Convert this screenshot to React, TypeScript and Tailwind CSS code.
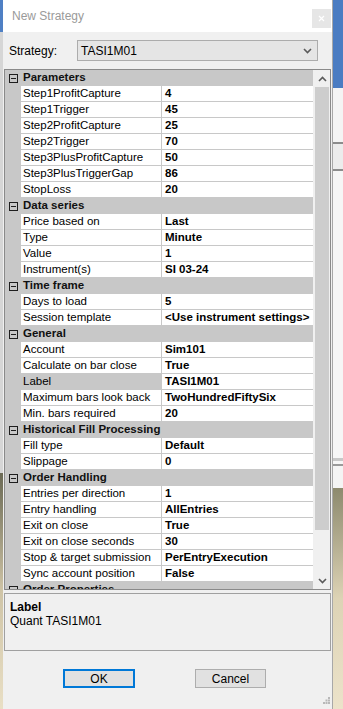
import React from "react";

type Row = { name: string; value: string; selected?: boolean };
type Cat = { title: string; rows: Row[] };

const cats: Cat[] = [
  {
    title: "Parameters",
    rows: [
      { name: "Step1ProfitCapture", value: "4" },
      { name: "Step1Trigger", value: "45" },
      { name: "Step2ProfitCapture", value: "25" },
      { name: "Step2Trigger", value: "70" },
      { name: "Step3PlusProfitCapture", value: "50" },
      { name: "Step3PlusTriggerGap", value: "86" },
      { name: "StopLoss", value: "20" },
    ],
  },
  {
    title: "Data series",
    rows: [
      { name: "Price based on", value: "Last" },
      { name: "Type", value: "Minute" },
      { name: "Value", value: "1" },
      { name: "Instrument(s)", value: "SI 03-24" },
    ],
  },
  {
    title: "Time frame",
    rows: [
      { name: "Days to load", value: "5" },
      { name: "Session template", value: "<Use instrument settings>" },
    ],
  },
  {
    title: "General",
    rows: [
      { name: "Account", value: "Sim101" },
      { name: "Calculate on bar close", value: "True" },
      { name: "Label", value: "TASI1M01", selected: true },
      { name: "Maximum bars look back", value: "TwoHundredFiftySix" },
      { name: "Min. bars required", value: "20" },
    ],
  },
  {
    title: "Historical Fill Processing",
    rows: [
      { name: "Fill type", value: "Default" },
      { name: "Slippage", value: "0" },
    ],
  },
  {
    title: "Order Handling",
    rows: [
      { name: "Entries per direction", value: "1" },
      { name: "Entry handling", value: "AllEntries" },
      { name: "Exit on close", value: "True" },
      { name: "Exit on close seconds", value: "30" },
      { name: "Stop & target submission", value: "PerEntryExecution" },
      { name: "Sync account position", value: "False" },
    ],
  },
  { title: "Order Properties", rows: [] },
];

function MinusBox() {
  return (
    <div className="w-[9px] h-[9px] border border-[#1e1e1e] flex items-center justify-center bg-[#c8c8c8]">
      <div className="w-[5px] h-[1px] bg-[#1e1e1e]" />
    </div>
  );
}

function CatRow({ title }: { title: string }) {
  return (
    <div className="h-[16px] flex items-center bg-[#c8c8c8] shrink-0">
      <div className="w-[16px] flex justify-center pl-[1px]">
        <MinusBox />
      </div>
      <div className="pl-[2px] font-bold text-[11.5px] text-[#111] leading-none whitespace-nowrap">{title}</div>
    </div>
  );
}

function PropRow({ row }: { row: Row }) {
  return (
    <div className="h-[16px] flex shrink-0">
      <div className="w-[16px] bg-[#c8c8c8]" />
      <div
        className={`w-[140px] border-b border-[#c8c8c8] flex items-center pl-[2px] text-[11.5px] leading-none text-black whitespace-nowrap ${
          row.selected ? "bg-[#c8c8c8]" : "bg-white"
        }`}
      >
        {row.name}
      </div>
      <div className="w-[1px] bg-[#c8c8c8]" />
      <div className="flex-1 border-b border-[#c8c8c8] bg-white flex items-center pl-[3px] text-[11.5px] font-bold leading-none text-black whitespace-nowrap">
        {row.value}
      </div>
    </div>
  );
}

function Chevron({ up }: { up?: boolean }) {
  return (
    <svg width="9" height="6" viewBox="0 0 9 6">
      <path
        d={up ? "M1 5 L4.5 1.5 L8 5" : "M1 1 L4.5 4.5 L8 1"}
        fill="none"
        stroke="#5a5a5a"
        strokeWidth="1.6"
      />
    </svg>
  );
}

export default function App() {
  return (
    <div
      className="w-[343px] h-[709px] flex overflow-hidden"
      style={{ fontFamily: '"Liberation Sans", Arial, sans-serif' }}
    >
      {/* left background strip */}
      <div className="w-[3px] flex flex-col shrink-0">
        <div className="h-[32px] bg-[#4f80c4]" />
        <div className="h-[441px] bg-[#d6d6d6]" />
        <div className="flex-1 bg-gradient-to-b from-[#6b6a55] via-[#cfc4a6] to-[#e9dfc5]" />
      </div>

      {/* dialog */}
      <div className="w-[330px] shrink-0 flex flex-col bg-[#f0f0f0] border-r border-[#a8a8a8]">
        {/* title bar */}
        <div className="h-[32px] bg-white flex items-center justify-between pl-[9px] pr-[1px] shrink-0">
          <span className="text-[12px] text-[#9a9a9a]">New Strategy</span>
          <div className="w-[19px] h-[19px] bg-[#e6e6e6] flex items-center justify-center mt-[4px]">
            <svg width="7" height="7" viewBox="0 0 7 7">
              <path d="M1 1 L6 6 M6 1 L1 6" stroke="#ffffff" strokeWidth="1.2" />
            </svg>
          </div>
        </div>

        {/* strategy row */}
        <div className="h-[37px] flex items-center shrink-0 pl-[6px]">
          <span className="text-[12px] text-black w-[68px]">Strategy:</span>
          <div className="w-[241px] h-[21px] bg-[#e5e5e5] border border-[#acacac] flex items-center justify-between pl-[3px] pr-[5px]">
            <span className="text-[12px] text-black">TASI1M01</span>
            <Chevron />
          </div>
        </div>

        {/* property grid */}
        <div className="mx-[1px] h-[521px] border border-[#8a8a8a] flex shrink-0 overflow-hidden bg-white">
          <div className="flex-1 flex flex-col overflow-hidden">
            {cats.map((c) => (
              <React.Fragment key={c.title}>
                <CatRow title={c.title} />
                {c.rows.map((r) => (
                  <PropRow key={r.name} row={r} />
                ))}
              </React.Fragment>
            ))}
          </div>
          <div className="w-[17px] flex flex-col bg-[#f0f0f0] border-l border-[#f0f0f0] shrink-0">
            <div className="h-[17px] flex items-center justify-center shrink-0">
              <Chevron up />
            </div>
            <div className="h-[443px] bg-[#cdcdcd] mx-[1px] shrink-0" />
            <div className="flex-1" />
            <div className="h-[17px] flex items-center justify-center shrink-0">
              <Chevron />
            </div>
          </div>
        </div>

        {/* description */}
        <div className="mx-[1px] mt-[3px] h-[58px] border border-[#a0a0a0] bg-[#f0f0f0] px-[5px] pt-[6px] shrink-0">
          <div className="text-[12px] font-bold text-black leading-[14px]">Label</div>
          <div className="text-[12px] text-black leading-[14px]">Quant TASI1M01</div>
        </div>

        {/* buttons */}
        <div className="flex pl-[60px] gap-[60px] mt-[18px] shrink-0">
          <div className="w-[72px] h-[19px] border-2 border-[#0078d7] bg-[#e1e1e1] flex items-center justify-center text-[12px] text-black">
            OK
          </div>
          <div className="w-[71px] h-[19px] border border-[#adadad] bg-[#e1e1e1] flex items-center justify-center text-[12px] text-black">
            Cancel
          </div>
        </div>

        <div className="flex-1 flex items-end justify-end pr-[2px] pb-[5px]">
          <svg width="7" height="7" viewBox="0 0 7 7">
            <rect x="5" y="0" width="2" height="2" fill="#b8b8b8" />
            <rect x="2.5" y="2.5" width="2" height="2" fill="#b8b8b8" />
            <rect x="5" y="2.5" width="2" height="2" fill="#b8b8b8" />
            <rect x="0" y="5" width="2" height="2" fill="#b8b8b8" />
            <rect x="2.5" y="5" width="2" height="2" fill="#b8b8b8" />
            <rect x="5" y="5" width="2" height="2" fill="#b8b8b8" />
          </svg>
        </div>
      </div>

      {/* right background strip */}
      <div className="flex-1 flex flex-col">
        <div className="h-[88px] bg-[#4a7cc2]" />
        <div className="h-[54px] bg-[#f4f4f4]" />
        <div className="h-[2px] bg-[#8c8c8c]" />
        <div className="h-[25px] bg-[#ececec]" />
        <div className="h-[2px] bg-[#8c8c8c]" />
        <div className="h-[287px] bg-[#f6f6f6]" />
        <div className="h-[3px] bg-[#c8c8c8]" />
        <div className="h-[3px] bg-[#f6f6f6]" />
        <div className="h-[2px] bg-[#9a9a9a]" />
        <div className="h-[22px] bg-[#f4f4f4]" />
        <div className="flex-1 bg-gradient-to-b from-[#8d8a6e] via-[#ddd3b5] to-[#ece3ca]" />
      </div>
    </div>
  );
}
